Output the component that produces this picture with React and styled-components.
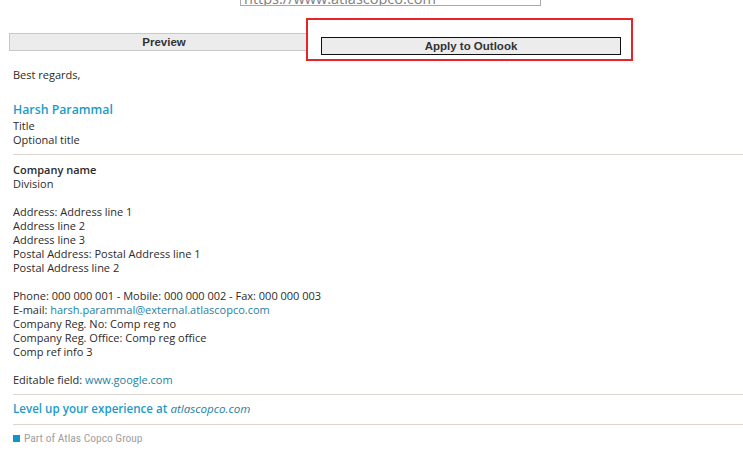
import React from "react";
import styled, { createGlobalStyle } from "styled-components";

const GlobalStyle = createGlobalStyle`
  html, body {
    margin: 0;
    padding: 0;
    background: #ffffff;
    overflow: hidden;
  }
  body {
    font-family: "Open Sans", "Noto Sans", sans-serif;
    color: #2b2b2b;
  }
`;

function App() {
  return (
    <Page>
      <GlobalStyle />
      <TopRow>
        <FieldLabel>Website link: *</FieldLabel>
        <UrlInput readOnly value="https://www.atlascopco.com" />
      </TopRow>

      <ButtonRow>
        <ActionButton>Preview</ActionButton>
        <Highlight>
          <ActionButton $active>Apply to Outlook</ActionButton>
        </Highlight>
      </ButtonRow>

      <Signature>
        <Line>Best regards,</Line>
        <Gap />
        <Name>Harsh Parammal</Name>
        <Line>Title</Line>
        <Line>Optional title</Line>
        <Divider $after={8} />
        <Line $bold>Company name</Line>
        <Line>Division</Line>
        <Gap />
        <Line>Address: Address line 1</Line>
        <Line>Address line 2</Line>
        <Line>Address line 3</Line>
        <Line>Postal Address: Postal Address line 1</Line>
        <Line>Postal Address line 2</Line>
        <Gap />
        <Line>Phone: 000 000 001 - Mobile: 000 000 002 - Fax: 000 000 003</Line>
        <Line>
          E-mail: <Link>harsh.parammal@external.atlascopco.com</Link>
        </Line>
        <Line>Company Reg. No: Comp reg no</Line>
        <Line>Company Reg. Office: Comp reg office</Line>
        <Line>Comp ref info 3</Line>
        <Gap />
        <Line>
          Editable field: <Link>www.google.com</Link>
        </Line>
        <Divider $after={6} />
        <Promo>
          Level up your experience at <PromoLink>atlascopco.com</PromoLink>
        </Promo>
        <Divider $after={6} />
        <Group>
          <Square />
          Part of Atlas Copco Group
        </Group>
      </Signature>
    </Page>
  );
}

export default App;

const Page = styled.div`
  width: 743px;
  height: 467px;
  overflow: hidden;
`;

const TopRow = styled.div`
  display: flex;
  align-items: flex-start;
  margin-top: -16px;
  height: 22px;
`;

const FieldLabel = styled.span`
  width: 240px;
  padding-left: 13px;
  box-sizing: border-box;
  font-size: 11px;
  line-height: 14px;
  color: #333;
`;

const UrlInput = styled.input`
  width: 301px;
  height: 22px;
  box-sizing: border-box;
  border: 1px solid #a9a9a9;
  padding: 6px 3px 0;
  font-family: "Open Sans", sans-serif;
  font-size: 14.5px;
  color: #808080;
  outline: none;
`;

const ButtonRow = styled.div`
  display: flex;
  align-items: flex-start;
  margin-top: 12px;
  padding-left: 9px;
  height: 43px;
`;

const ActionButton = styled.button`
  width: ${(p) => (p.$active ? "300px" : "310px")};
  height: 18px;
  margin: ${(p) => (p.$active ? "0" : "15px 0 0")};
  padding: 0;
  box-sizing: border-box;
  background: #ececec;
  border: 1px solid ${(p) => (p.$active ? "#111" : "#c8c8c8")};
  border-radius: 0;
  font-family: "Liberation Sans", Arial, sans-serif;
  font-weight: bold;
  font-size: 11.5px;
  color: #333;
  line-height: 16px;
`;

const Highlight = styled.div`
  margin-left: -13px;
  width: 327px;
  height: 43px;
  box-sizing: border-box;
  border: 2px solid #e8242b;
  background: #ffffff;
  padding: 13px 0 0 13px;
`;

const Signature = styled.div`
  padding: 7px 0 0 13px;
  font-size: 11px;
  line-height: 14px;
`;

const Line = styled.div`
  font-weight: ${(p) => (p.$bold ? 600 : 400)};
  color: #2b2b2b;
  white-space: nowrap;
`;

const Gap = styled.div`
  height: 14px;
`;

const Name = styled.div`
  font-size: 12.3px;
  font-weight: 600;
  line-height: 18px;
  color: #1a9bcb;
  margin-top: 5px;
`;

const Link = styled.span`
  color: #1e7fa6;
`;

const Divider = styled.div`
  height: 1px;
  background: #ddd5cf;
  margin: 7px 0 ${(p) => p.$after}px;
`;

const Promo = styled.div`
  font-size: 11.6px;
  font-weight: 600;
  line-height: 16px;
  color: #1a9bcb;
  white-space: nowrap;
`;

const PromoLink = styled.span`
  font-weight: 400;
  font-style: italic;
  color: #1e7fa6;
`;

const Group = styled.div`
  display: flex;
  align-items: center;
  gap: 4px;
  font-family: "Liberation Sans Narrow", "Roboto Condensed", sans-serif;
  font-size: 11.5px;
  line-height: 14px;
  color: #a0a0a0;
`;

const Square = styled.span`
  width: 7px;
  height: 7px;
  background: #0f95c6;
`;
